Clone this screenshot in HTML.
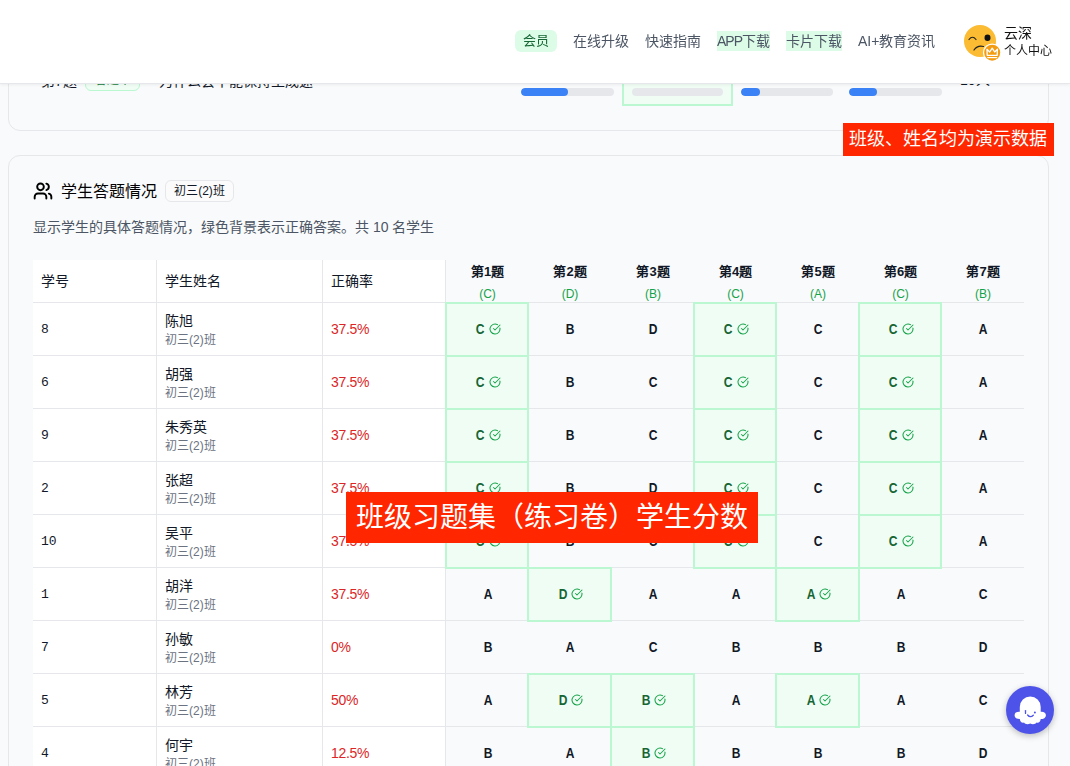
<!DOCTYPE html>
<html lang="zh-CN"><head><meta charset="utf-8">
<style>
*{box-sizing:border-box;margin:0;padding:0}
html,body{width:1070px;height:766px;overflow:hidden;background:#f9fafb;font-family:"Liberation Sans",sans-serif;color:#111827}
.abs{position:absolute}
.card{position:absolute;border:1px solid #e5e7eb;border-radius:12px;background:#f9fafb}
.hdr{position:absolute;left:0;top:0;width:1070px;height:84px;background:#fff;border-bottom:1px solid #e5e7eb;box-shadow:0 1px 3px rgba(0,0,0,.06);z-index:10}
.nav{position:absolute;top:31px;height:20px;line-height:20px;font-size:14px;color:#4b5563;white-space:nowrap}
.hl{background:#dcfce7}
.bar{position:absolute;height:8px;border-radius:4px;background:#e5e7eb;overflow:hidden}
.bar i{position:absolute;left:0;top:0;bottom:0;background:#3b82f6;border-radius:4px}
.hl1{position:absolute;height:1px;background:#e5e7eb;left:33px;width:991px}
.vl1{position:absolute;width:1px;background:#e5e7eb;top:260px;height:520px}
.ok{position:absolute;border:2px solid #bbf7d0;background:#f0fdf4}
.cell{position:absolute;display:flex;align-items:center;justify-content:center}
.ans{font-size:14px;font-weight:700;color:#111827;line-height:14px;display:inline-block;transform:scaleX(.86)}
.ans.g{color:#166534}
.ck{margin-left:3px;display:block}
.th{position:absolute;font-size:14px;line-height:20px;color:#111827;font-weight:500}
.qh{position:absolute;text-align:center;font-size:13px;font-weight:600;line-height:16px;color:#111827}
.qh b{display:block;font-size:12px;font-weight:400;color:#16a34a;margin-top:7px;line-height:14px}
.sid{position:absolute;left:41px;font-family:"Liberation Mono",monospace;font-size:13px;line-height:16px;color:#111827}
.nm{position:absolute;left:165px;font-size:14px;line-height:18px;color:#111827;font-weight:500}
.cls{position:absolute;left:165px;font-size:12px;line-height:16px;color:#6b7280}
.acc{position:absolute;left:331px;font-size:14px;line-height:18px;color:#dc2626;letter-spacing:-0.3px}
.banner{position:absolute;background:#ff2600;color:#fff;white-space:nowrap;z-index:20;font-weight:500}
</style></head><body>

<div class="card" style="left:8px;top:-100px;width:1041px;height:231px"></div>
<div class="abs" style="left:41px;top:71px;font-size:14px;line-height:20px;white-space:nowrap">第7题</div>
<div class="abs" style="left:85px;top:69px;width:55px;height:22px;border:1px solid #bbf7d0;background:#f0fdf4;border-radius:6px;font-size:12px;line-height:20px;color:#15803d;text-align:center">答题率</div>
<div class="abs" style="left:159px;top:71px;font-size:14px;line-height:20px;white-space:nowrap">为什么会不能保持生成速</div>
<div class="bar" style="left:521px;top:88px;width:93px"><i style="width:47px"></i></div>
<div class="abs" style="left:622px;top:60px;width:111px;height:46px;border:2px solid #bbf7d0;background:#f0fdf4"></div>
<div class="bar" style="left:632px;top:88px;width:91px"></div>
<div class="bar" style="left:741px;top:88px;width:92px"><i style="width:19px"></i></div>
<div class="bar" style="left:849px;top:88px;width:93px"><i style="width:28px"></i></div>
<div class="abs" style="left:960px;top:70px;font-size:14px;line-height:20px;color:#111827">10人</div>
<div class="hdr">
<div class="abs" style="left:515px;top:30px;width:42px;height:22px;border-radius:6px;background:#dcfce7"></div>
<div class="nav" style="left:523px;color:#166534;font-size:13px">会员</div>
<div class="nav" style="left:573px">在线升级</div>
<div class="nav" style="left:645px">快速指南</div>
<div class="nav hl" style="left:717px"><span style="letter-spacing:-1px">APP</span>下载</div>
<div class="nav hl" style="left:786px">卡片下载</div>
<div class="nav" style="left:858px">AI+教育资讯</div>
<svg class="abs" style="left:962px;top:23px" width="42" height="42" viewBox="0 0 42 42">
<circle cx="18" cy="18" r="16" fill="#fbbb33"/>
<path d="M7 16.5 Q10.5 12 14 16.5" stroke="#222" stroke-width="1.2" fill="none" stroke-linecap="round"/>
<ellipse cx="25.5" cy="14.8" rx="3" ry="3.2" fill="#111"/>
<path d="M12 27 Q15.5 22 21.5 23.5" stroke="#222" stroke-width="1.2" fill="none" stroke-linecap="round"/>
<circle cx="30.2" cy="29.7" r="9.3" fill="#fff"/>
<circle cx="30.2" cy="29.7" r="8" fill="#f39c12"/>
<path d="M25.2 32.3 L25 26.3 L27.7 29 L30.2 25.2 L32.7 29 L35.4 26.3 L35.2 32.3 Z" fill="none" stroke="#fff" stroke-width="1.3" stroke-linejoin="round"/>
<path d="M25.2 34.6 H35.2" stroke="#fff" stroke-width="1.2"/>
</svg>
<div class="abs" style="left:1004px;top:24px;font-size:14px;line-height:18px;color:#111">云深</div>
<div class="abs" style="left:1004px;top:43px;font-size:12px;line-height:16px;color:#111">个人中心</div>
</div>
<div class="banner" style="left:843px;top:123px;width:211px;height:33px;font-size:18px;line-height:33px;padding-left:6px">班级、姓名均为演示数据</div>
<div class="card" style="left:8px;top:155px;width:1041px;height:700px"></div>
<svg class="abs" style="left:33px;top:181px" width="20" height="20" viewBox="0 0 24 24" fill="none" stroke="#000" stroke-width="2.3" stroke-linecap="round" stroke-linejoin="round"><path d="M16 21v-2a4 4 0 0 0-4-4H6a4 4 0 0 0-4 4v2"/><circle cx="9" cy="7" r="4"/><path d="M22 21v-2a4 4 0 0 0-3-3.87"/><path d="M16 3.13a4 4 0 0 1 0 7.75"/></svg>
<div class="abs" style="left:61px;top:181px;font-size:16px;line-height:22px;font-weight:500;color:#000;white-space:nowrap">学生答题情况</div>
<div class="abs" style="left:165px;top:180px;width:69px;height:22px;border:1px solid #e5e7eb;border-radius:6px;background:#fbfbfc;font-size:12px;line-height:21px;text-align:center;color:#111827">初三(2)班</div>
<div class="abs" style="left:33px;top:217px;font-size:14px;line-height:20px;color:#4b5563;white-space:nowrap">显示学生的具体答题情况，绿色背景表示正确答案。共 10 名学生</div>
<div class="abs" style="left:33px;top:260px;width:412px;height:520px;background:#fff"></div>
<div class="hl1" style="top:302px"></div>
<div class="hl1" style="top:355px"></div>
<div class="hl1" style="top:408px"></div>
<div class="hl1" style="top:461px"></div>
<div class="hl1" style="top:514px"></div>
<div class="hl1" style="top:567px"></div>
<div class="hl1" style="top:620px"></div>
<div class="hl1" style="top:673px"></div>
<div class="hl1" style="top:726px"></div>
<div class="hl1" style="top:779px"></div>
<div class="vl1" style="left:156px"></div>
<div class="vl1" style="left:322px"></div>
<div class="vl1" style="left:445px"></div>
<div class="th" style="left:41px;top:271px">学号</div>
<div class="th" style="left:165px;top:271px">学生姓名</div>
<div class="th" style="left:331px;top:271px">正确率</div>
<div class="qh" style="left:446px;top:264px;width:83px">第1题<b>(C)</b></div>
<div class="qh" style="left:528px;top:264px;width:84px">第2题<b>(D)</b></div>
<div class="qh" style="left:611px;top:264px;width:84px">第3题<b>(B)</b></div>
<div class="qh" style="left:694px;top:264px;width:83px">第4题<b>(C)</b></div>
<div class="qh" style="left:776px;top:264px;width:84px">第5题<b>(A)</b></div>
<div class="qh" style="left:859px;top:264px;width:83px">第6题<b>(C)</b></div>
<div class="qh" style="left:941px;top:264px;width:84px">第7题<b>(B)</b></div>
<div class="ok" style="left:445px;top:302px;width:84px;height:55px"></div>
<div class="ok" style="left:693px;top:302px;width:84px;height:55px"></div>
<div class="ok" style="left:858px;top:302px;width:84px;height:55px"></div>
<div class="sid" style="top:322px">8</div>
<div class="nm" style="top:312px">陈旭</div>
<div class="cls" style="top:332px">初三(2)班</div>
<div class="acc" style="top:320px">37.5%</div>
<div class="cell" style="left:446px;top:301px;width:84px;height:55px"><span class="ans g">C</span><svg class="ck" viewBox="0 0 24 24" width="12" height="12" fill="none" stroke="#16a34a" stroke-width="2.1" stroke-linecap="round" stroke-linejoin="round"><path d="M21.8 10A10 10 0 1 1 17 3.34"/><path d="m9 11 3 3L22 4"/></svg></div>
<div class="cell" style="left:528px;top:301px;width:85px;height:55px"><span class="ans">B</span></div>
<div class="cell" style="left:611px;top:301px;width:85px;height:55px"><span class="ans">D</span></div>
<div class="cell" style="left:694px;top:301px;width:84px;height:55px"><span class="ans g">C</span><svg class="ck" viewBox="0 0 24 24" width="12" height="12" fill="none" stroke="#16a34a" stroke-width="2.1" stroke-linecap="round" stroke-linejoin="round"><path d="M21.8 10A10 10 0 1 1 17 3.34"/><path d="m9 11 3 3L22 4"/></svg></div>
<div class="cell" style="left:776px;top:301px;width:85px;height:55px"><span class="ans">C</span></div>
<div class="cell" style="left:859px;top:301px;width:84px;height:55px"><span class="ans g">C</span><svg class="ck" viewBox="0 0 24 24" width="12" height="12" fill="none" stroke="#16a34a" stroke-width="2.1" stroke-linecap="round" stroke-linejoin="round"><path d="M21.8 10A10 10 0 1 1 17 3.34"/><path d="m9 11 3 3L22 4"/></svg></div>
<div class="cell" style="left:941px;top:301px;width:85px;height:55px"><span class="ans">A</span></div>
<div class="ok" style="left:445px;top:355px;width:84px;height:55px"></div>
<div class="ok" style="left:693px;top:355px;width:84px;height:55px"></div>
<div class="ok" style="left:858px;top:355px;width:84px;height:55px"></div>
<div class="sid" style="top:375px">6</div>
<div class="nm" style="top:365px">胡强</div>
<div class="cls" style="top:385px">初三(2)班</div>
<div class="acc" style="top:373px">37.5%</div>
<div class="cell" style="left:446px;top:354px;width:84px;height:55px"><span class="ans g">C</span><svg class="ck" viewBox="0 0 24 24" width="12" height="12" fill="none" stroke="#16a34a" stroke-width="2.1" stroke-linecap="round" stroke-linejoin="round"><path d="M21.8 10A10 10 0 1 1 17 3.34"/><path d="m9 11 3 3L22 4"/></svg></div>
<div class="cell" style="left:528px;top:354px;width:85px;height:55px"><span class="ans">B</span></div>
<div class="cell" style="left:611px;top:354px;width:85px;height:55px"><span class="ans">C</span></div>
<div class="cell" style="left:694px;top:354px;width:84px;height:55px"><span class="ans g">C</span><svg class="ck" viewBox="0 0 24 24" width="12" height="12" fill="none" stroke="#16a34a" stroke-width="2.1" stroke-linecap="round" stroke-linejoin="round"><path d="M21.8 10A10 10 0 1 1 17 3.34"/><path d="m9 11 3 3L22 4"/></svg></div>
<div class="cell" style="left:776px;top:354px;width:85px;height:55px"><span class="ans">C</span></div>
<div class="cell" style="left:859px;top:354px;width:84px;height:55px"><span class="ans g">C</span><svg class="ck" viewBox="0 0 24 24" width="12" height="12" fill="none" stroke="#16a34a" stroke-width="2.1" stroke-linecap="round" stroke-linejoin="round"><path d="M21.8 10A10 10 0 1 1 17 3.34"/><path d="m9 11 3 3L22 4"/></svg></div>
<div class="cell" style="left:941px;top:354px;width:85px;height:55px"><span class="ans">A</span></div>
<div class="ok" style="left:445px;top:408px;width:84px;height:55px"></div>
<div class="ok" style="left:693px;top:408px;width:84px;height:55px"></div>
<div class="ok" style="left:858px;top:408px;width:84px;height:55px"></div>
<div class="sid" style="top:428px">9</div>
<div class="nm" style="top:418px">朱秀英</div>
<div class="cls" style="top:438px">初三(2)班</div>
<div class="acc" style="top:426px">37.5%</div>
<div class="cell" style="left:446px;top:407px;width:84px;height:55px"><span class="ans g">C</span><svg class="ck" viewBox="0 0 24 24" width="12" height="12" fill="none" stroke="#16a34a" stroke-width="2.1" stroke-linecap="round" stroke-linejoin="round"><path d="M21.8 10A10 10 0 1 1 17 3.34"/><path d="m9 11 3 3L22 4"/></svg></div>
<div class="cell" style="left:528px;top:407px;width:85px;height:55px"><span class="ans">B</span></div>
<div class="cell" style="left:611px;top:407px;width:85px;height:55px"><span class="ans">C</span></div>
<div class="cell" style="left:694px;top:407px;width:84px;height:55px"><span class="ans g">C</span><svg class="ck" viewBox="0 0 24 24" width="12" height="12" fill="none" stroke="#16a34a" stroke-width="2.1" stroke-linecap="round" stroke-linejoin="round"><path d="M21.8 10A10 10 0 1 1 17 3.34"/><path d="m9 11 3 3L22 4"/></svg></div>
<div class="cell" style="left:776px;top:407px;width:85px;height:55px"><span class="ans">C</span></div>
<div class="cell" style="left:859px;top:407px;width:84px;height:55px"><span class="ans g">C</span><svg class="ck" viewBox="0 0 24 24" width="12" height="12" fill="none" stroke="#16a34a" stroke-width="2.1" stroke-linecap="round" stroke-linejoin="round"><path d="M21.8 10A10 10 0 1 1 17 3.34"/><path d="m9 11 3 3L22 4"/></svg></div>
<div class="cell" style="left:941px;top:407px;width:85px;height:55px"><span class="ans">A</span></div>
<div class="ok" style="left:445px;top:461px;width:84px;height:55px"></div>
<div class="ok" style="left:693px;top:461px;width:84px;height:55px"></div>
<div class="ok" style="left:858px;top:461px;width:84px;height:55px"></div>
<div class="sid" style="top:481px">2</div>
<div class="nm" style="top:471px">张超</div>
<div class="cls" style="top:491px">初三(2)班</div>
<div class="acc" style="top:479px">37.5%</div>
<div class="cell" style="left:446px;top:460px;width:84px;height:55px"><span class="ans g">C</span><svg class="ck" viewBox="0 0 24 24" width="12" height="12" fill="none" stroke="#16a34a" stroke-width="2.1" stroke-linecap="round" stroke-linejoin="round"><path d="M21.8 10A10 10 0 1 1 17 3.34"/><path d="m9 11 3 3L22 4"/></svg></div>
<div class="cell" style="left:528px;top:460px;width:85px;height:55px"><span class="ans">B</span></div>
<div class="cell" style="left:611px;top:460px;width:85px;height:55px"><span class="ans">D</span></div>
<div class="cell" style="left:694px;top:460px;width:84px;height:55px"><span class="ans g">C</span><svg class="ck" viewBox="0 0 24 24" width="12" height="12" fill="none" stroke="#16a34a" stroke-width="2.1" stroke-linecap="round" stroke-linejoin="round"><path d="M21.8 10A10 10 0 1 1 17 3.34"/><path d="m9 11 3 3L22 4"/></svg></div>
<div class="cell" style="left:776px;top:460px;width:85px;height:55px"><span class="ans">C</span></div>
<div class="cell" style="left:859px;top:460px;width:84px;height:55px"><span class="ans g">C</span><svg class="ck" viewBox="0 0 24 24" width="12" height="12" fill="none" stroke="#16a34a" stroke-width="2.1" stroke-linecap="round" stroke-linejoin="round"><path d="M21.8 10A10 10 0 1 1 17 3.34"/><path d="m9 11 3 3L22 4"/></svg></div>
<div class="cell" style="left:941px;top:460px;width:85px;height:55px"><span class="ans">A</span></div>
<div class="ok" style="left:445px;top:514px;width:84px;height:55px"></div>
<div class="ok" style="left:693px;top:514px;width:84px;height:55px"></div>
<div class="ok" style="left:858px;top:514px;width:84px;height:55px"></div>
<div class="sid" style="top:534px">10</div>
<div class="nm" style="top:524px">吴平</div>
<div class="cls" style="top:544px">初三(2)班</div>
<div class="acc" style="top:532px">37.5%</div>
<div class="cell" style="left:446px;top:513px;width:84px;height:55px"><span class="ans g">C</span><svg class="ck" viewBox="0 0 24 24" width="12" height="12" fill="none" stroke="#16a34a" stroke-width="2.1" stroke-linecap="round" stroke-linejoin="round"><path d="M21.8 10A10 10 0 1 1 17 3.34"/><path d="m9 11 3 3L22 4"/></svg></div>
<div class="cell" style="left:528px;top:513px;width:85px;height:55px"><span class="ans">B</span></div>
<div class="cell" style="left:611px;top:513px;width:85px;height:55px"><span class="ans">C</span></div>
<div class="cell" style="left:694px;top:513px;width:84px;height:55px"><span class="ans g">C</span><svg class="ck" viewBox="0 0 24 24" width="12" height="12" fill="none" stroke="#16a34a" stroke-width="2.1" stroke-linecap="round" stroke-linejoin="round"><path d="M21.8 10A10 10 0 1 1 17 3.34"/><path d="m9 11 3 3L22 4"/></svg></div>
<div class="cell" style="left:776px;top:513px;width:85px;height:55px"><span class="ans">C</span></div>
<div class="cell" style="left:859px;top:513px;width:84px;height:55px"><span class="ans g">C</span><svg class="ck" viewBox="0 0 24 24" width="12" height="12" fill="none" stroke="#16a34a" stroke-width="2.1" stroke-linecap="round" stroke-linejoin="round"><path d="M21.8 10A10 10 0 1 1 17 3.34"/><path d="m9 11 3 3L22 4"/></svg></div>
<div class="cell" style="left:941px;top:513px;width:85px;height:55px"><span class="ans">A</span></div>
<div class="ok" style="left:527px;top:567px;width:85px;height:55px"></div>
<div class="ok" style="left:775px;top:567px;width:85px;height:55px"></div>
<div class="sid" style="top:587px">1</div>
<div class="nm" style="top:577px">胡洋</div>
<div class="cls" style="top:597px">初三(2)班</div>
<div class="acc" style="top:585px">37.5%</div>
<div class="cell" style="left:446px;top:566px;width:84px;height:55px"><span class="ans">A</span></div>
<div class="cell" style="left:528px;top:566px;width:85px;height:55px"><span class="ans g">D</span><svg class="ck" viewBox="0 0 24 24" width="12" height="12" fill="none" stroke="#16a34a" stroke-width="2.1" stroke-linecap="round" stroke-linejoin="round"><path d="M21.8 10A10 10 0 1 1 17 3.34"/><path d="m9 11 3 3L22 4"/></svg></div>
<div class="cell" style="left:611px;top:566px;width:85px;height:55px"><span class="ans">A</span></div>
<div class="cell" style="left:694px;top:566px;width:84px;height:55px"><span class="ans">A</span></div>
<div class="cell" style="left:776px;top:566px;width:85px;height:55px"><span class="ans g">A</span><svg class="ck" viewBox="0 0 24 24" width="12" height="12" fill="none" stroke="#16a34a" stroke-width="2.1" stroke-linecap="round" stroke-linejoin="round"><path d="M21.8 10A10 10 0 1 1 17 3.34"/><path d="m9 11 3 3L22 4"/></svg></div>
<div class="cell" style="left:859px;top:566px;width:84px;height:55px"><span class="ans">A</span></div>
<div class="cell" style="left:941px;top:566px;width:85px;height:55px"><span class="ans">C</span></div>
<div class="sid" style="top:640px">7</div>
<div class="nm" style="top:630px">孙敏</div>
<div class="cls" style="top:650px">初三(2)班</div>
<div class="acc" style="top:638px">0%</div>
<div class="cell" style="left:446px;top:619px;width:84px;height:55px"><span class="ans">B</span></div>
<div class="cell" style="left:528px;top:619px;width:85px;height:55px"><span class="ans">A</span></div>
<div class="cell" style="left:611px;top:619px;width:85px;height:55px"><span class="ans">C</span></div>
<div class="cell" style="left:694px;top:619px;width:84px;height:55px"><span class="ans">B</span></div>
<div class="cell" style="left:776px;top:619px;width:85px;height:55px"><span class="ans">B</span></div>
<div class="cell" style="left:859px;top:619px;width:84px;height:55px"><span class="ans">B</span></div>
<div class="cell" style="left:941px;top:619px;width:85px;height:55px"><span class="ans">D</span></div>
<div class="ok" style="left:527px;top:673px;width:85px;height:55px"></div>
<div class="ok" style="left:610px;top:673px;width:85px;height:55px"></div>
<div class="ok" style="left:775px;top:673px;width:85px;height:55px"></div>
<div class="sid" style="top:693px">5</div>
<div class="nm" style="top:683px">林芳</div>
<div class="cls" style="top:703px">初三(2)班</div>
<div class="acc" style="top:691px">50%</div>
<div class="cell" style="left:446px;top:672px;width:84px;height:55px"><span class="ans">A</span></div>
<div class="cell" style="left:528px;top:672px;width:85px;height:55px"><span class="ans g">D</span><svg class="ck" viewBox="0 0 24 24" width="12" height="12" fill="none" stroke="#16a34a" stroke-width="2.1" stroke-linecap="round" stroke-linejoin="round"><path d="M21.8 10A10 10 0 1 1 17 3.34"/><path d="m9 11 3 3L22 4"/></svg></div>
<div class="cell" style="left:611px;top:672px;width:85px;height:55px"><span class="ans g">B</span><svg class="ck" viewBox="0 0 24 24" width="12" height="12" fill="none" stroke="#16a34a" stroke-width="2.1" stroke-linecap="round" stroke-linejoin="round"><path d="M21.8 10A10 10 0 1 1 17 3.34"/><path d="m9 11 3 3L22 4"/></svg></div>
<div class="cell" style="left:694px;top:672px;width:84px;height:55px"><span class="ans">A</span></div>
<div class="cell" style="left:776px;top:672px;width:85px;height:55px"><span class="ans g">A</span><svg class="ck" viewBox="0 0 24 24" width="12" height="12" fill="none" stroke="#16a34a" stroke-width="2.1" stroke-linecap="round" stroke-linejoin="round"><path d="M21.8 10A10 10 0 1 1 17 3.34"/><path d="m9 11 3 3L22 4"/></svg></div>
<div class="cell" style="left:859px;top:672px;width:84px;height:55px"><span class="ans">A</span></div>
<div class="cell" style="left:941px;top:672px;width:85px;height:55px"><span class="ans">C</span></div>
<div class="ok" style="left:610px;top:726px;width:85px;height:55px"></div>
<div class="sid" style="top:746px">4</div>
<div class="nm" style="top:736px">何宇</div>
<div class="cls" style="top:756px">初三(2)班</div>
<div class="acc" style="top:744px">12.5%</div>
<div class="cell" style="left:446px;top:725px;width:84px;height:55px"><span class="ans">B</span></div>
<div class="cell" style="left:528px;top:725px;width:85px;height:55px"><span class="ans">A</span></div>
<div class="cell" style="left:611px;top:725px;width:85px;height:55px"><span class="ans g">B</span><svg class="ck" viewBox="0 0 24 24" width="12" height="12" fill="none" stroke="#16a34a" stroke-width="2.1" stroke-linecap="round" stroke-linejoin="round"><path d="M21.8 10A10 10 0 1 1 17 3.34"/><path d="m9 11 3 3L22 4"/></svg></div>
<div class="cell" style="left:694px;top:725px;width:84px;height:55px"><span class="ans">B</span></div>
<div class="cell" style="left:776px;top:725px;width:85px;height:55px"><span class="ans">B</span></div>
<div class="cell" style="left:859px;top:725px;width:84px;height:55px"><span class="ans">B</span></div>
<div class="cell" style="left:941px;top:725px;width:85px;height:55px"><span class="ans">D</span></div>
<div class="banner" style="left:346px;top:492px;width:412px;height:51px;font-size:28px;line-height:51px;padding-left:10px">班级习题集（练习卷）学生分数</div>
<div class="abs" style="left:1006px;top:686px;width:48px;height:48px;border-radius:50%;background:#4d53e8;box-shadow:0 2px 6px rgba(0,0,0,.25);z-index:30">
<svg width="48" height="48" viewBox="0 0 48 48" style="display:block">
<path d="M13.8 21 A10.45 10.45 0 0 1 34.7 21 L34.7 25.8 C38 25.5 40 27 39.9 29.4 C39.8 31.8 37.5 33 34.7 33 C34.5 36 32.5 37.2 30.5 36.5 C29.5 38.3 26.5 38.8 24.25 37.5 C22 38.8 19 38.3 18 36.5 C16 37.2 14 36 13.8 33 C11 33 8.7 31.8 8.6 29.4 C8.5 27 10.5 25.5 13.8 25.8 Z" fill="#fff"/>
<path d="M19.5 24.6 V27.4" stroke="#4d53e8" stroke-width="1.3" stroke-linecap="round"/>
<circle cx="28.9" cy="26.6" r="1" fill="#4d53e8"/>
<path d="M21.6 29 Q24.3 32.2 27.3 29.2" stroke="#4d53e8" stroke-width="1.3" fill="none" stroke-linecap="round"/>
</svg></div>
</body></html>
